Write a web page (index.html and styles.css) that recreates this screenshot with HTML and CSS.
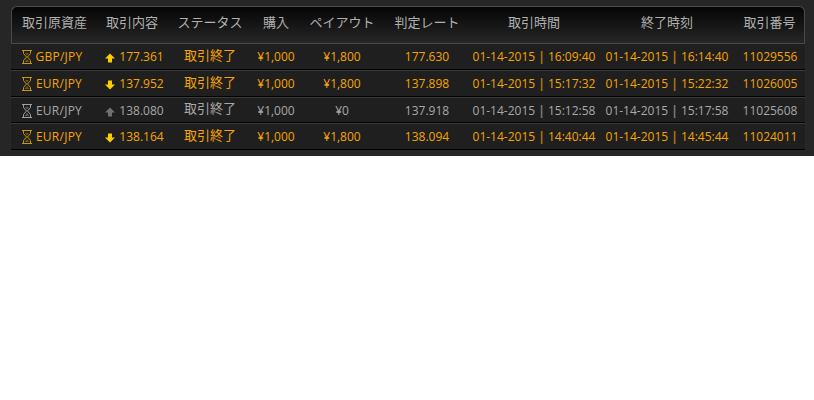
FILE: index.html
```html
<!DOCTYPE html>
<html lang="ja">
<head>
<meta charset="utf-8">
<title>取引履歴</title>
<link rel="stylesheet" href="styles.css">
</head>
<body>
<svg class="defs" width="0" height="0" aria-hidden="true">
  <symbol id="glass" viewBox="0 0 10 14">
    <path d="M0 .5h10M0 13.500h10" stroke="currentColor" fill="none"/>
    <path d="M1.500 1v2.500L4.500 7l-3 3.500V13M8.500 1v2.500L5.500 7l3 3.500V13" stroke="currentColor" fill="none"/>
    <path d="M3 3h4L5 5.500zM5 9l2.500 3h-5z" fill="currentColor" opacity=".45"/>
  </symbol>
  <symbol id="up" viewBox="0 0 10 10"><path d="M5 .5 10 5.500H7V9.500H3V5.500H0z" fill="currentColor"/></symbol>
  <symbol id="down" viewBox="0 0 10 10"><path d="M5 9.500 10 4.500H7V.5H3V4.500H0z" fill="currentColor"/></symbol>
</svg>
<main class="panel">
<table class="history">
  <colgroup>
    <col class="c1"><col class="c2"><col class="c3"><col class="c4"><col class="c5"><col class="c6"><col class="c7"><col class="c8"><col class="c9">
  </colgroup>
  <thead>
    <tr><th>取引原資産</th><th>取引内容</th><th>ステータス</th><th>購入</th><th>ペイアウト</th><th>判定レート</th><th>取引時間</th><th>終了時刻</th><th>取引番号</th></tr>
  </thead>
  <tbody>
    <tr class="win">
      <td class="asset"><svg class="glass"><use href="#glass"/></svg>GBP/JPY</td>
      <td class="rate"><svg class="arrow"><use href="#up"/></svg>177.361</td>
      <td class="status">取引終了</td><td>¥1,000</td><td>¥1,800</td><td>177.630</td>
      <td>01-14-2015 <b class="sep">|</b> 16:09:40</td><td>01-14-2015 <b class="sep">|</b> 16:14:40</td><td>11029556</td>
    </tr>
    <tr class="win">
      <td class="asset"><svg class="glass"><use href="#glass"/></svg>EUR/JPY</td>
      <td class="rate"><svg class="arrow"><use href="#down"/></svg>137.952</td>
      <td class="status">取引終了</td><td>¥1,000</td><td>¥1,800</td><td>137.898</td>
      <td>01-14-2015 <b class="sep">|</b> 15:17:32</td><td>01-14-2015 <b class="sep">|</b> 15:22:32</td><td>11026005</td>
    </tr>
    <tr class="lose">
      <td class="asset"><svg class="glass"><use href="#glass"/></svg>EUR/JPY</td>
      <td class="rate"><svg class="arrow"><use href="#up"/></svg>138.080</td>
      <td class="status">取引終了</td><td>¥1,000</td><td>¥0</td><td>137.918</td>
      <td>01-14-2015 <b class="sep">|</b> 15:12:58</td><td>01-14-2015 <b class="sep">|</b> 15:17:58</td><td>11025608</td>
    </tr>
    <tr class="win">
      <td class="asset"><svg class="glass"><use href="#glass"/></svg>EUR/JPY</td>
      <td class="rate"><svg class="arrow"><use href="#down"/></svg>138.164</td>
      <td class="status">取引終了</td><td>¥1,000</td><td>¥1,800</td><td>138.094</td>
      <td>01-14-2015 <b class="sep">|</b> 14:40:44</td><td>01-14-2015 <b class="sep">|</b> 14:45:44</td><td>11024011</td>
    </tr>
  </tbody>
</table>
</main>
</body>
</html>
```
FILE: styles.css
```css
html, body {
  margin: 0;
  background: #fff;
}
body {
  font-family: "Open Sans", "Noto Sans CJK JP", sans-serif;
  font-size: 12px;
}
.defs {
  position: absolute;
}
.panel {
  box-sizing: border-box;
  height: 156px;
  padding: 6px 9px 0 11px;
  background: #262626;
}
.history {
  width: 794px;
  table-layout: fixed;
  border-collapse: separate;
  border-spacing: 0;
}
.c1 { width: 86px; }
.c2 { width: 70px; }
.c3 { width: 86px; }
.c4 { width: 46px; }
.c5 { width: 86px; }
.c6 { width: 84px; }
.c7 { width: 130px; }
.c8 { width: 136px; }
.c9 { width: 70px; }
th {
  height: 38px;
  padding: 0 0 8px;
  box-sizing: border-box;
  font-size: 13px;
  font-weight: 400;
  color: #b0b0b0;
  text-align: center;
  white-space: nowrap;
  background: linear-gradient(#050505, #262626);
  border-top: 1px solid #4a4a4a;
  border-bottom: 1px solid #4a4a4a;
}
th:first-child {
  border-left: 1px solid #4a4a4a;
  border-top-left-radius: 6px;
}
th:last-child {
  border-right: 1px solid #4a4a4a;
  border-top-right-radius: 6px;
}
td {
  box-sizing: border-box;
  padding: 0;
  text-align: center;
  white-space: nowrap;
  background: #1f1f1f;
  border-top: 1px solid #3a3a3a;
  border-bottom: 1px solid #000;
}
tbody tr:nth-child(odd) td {
  height: 26px;
}
tbody tr:nth-child(even) td {
  height: 27px;
}
tbody tr:first-child td {
  border-top: 0;
}
.win td { color: #f5a500; }
.lose td { color: #a8a8a8; }
td.status {
  font-size: 13px;
  padding-bottom: 5px;
}
.sep {
  font-weight: 700;
  opacity: .7;
}
.glass {
  width: 10px;
  height: 14px;
  margin-right: 4px;
  vertical-align: -3px;
  color: #c8960c;
}
.lose .glass { color: #a0a0a0; }
td.asset {
  padding-right: 4px;
  letter-spacing: .25px;
}
td.rate {
  padding-left: 5px;
}
.arrow {
  width: 10px;
  height: 10px;
  margin-right: 4px;
  vertical-align: -2px;
  color: #ffcc00;
}
.lose .arrow { color: #707070; }
```
